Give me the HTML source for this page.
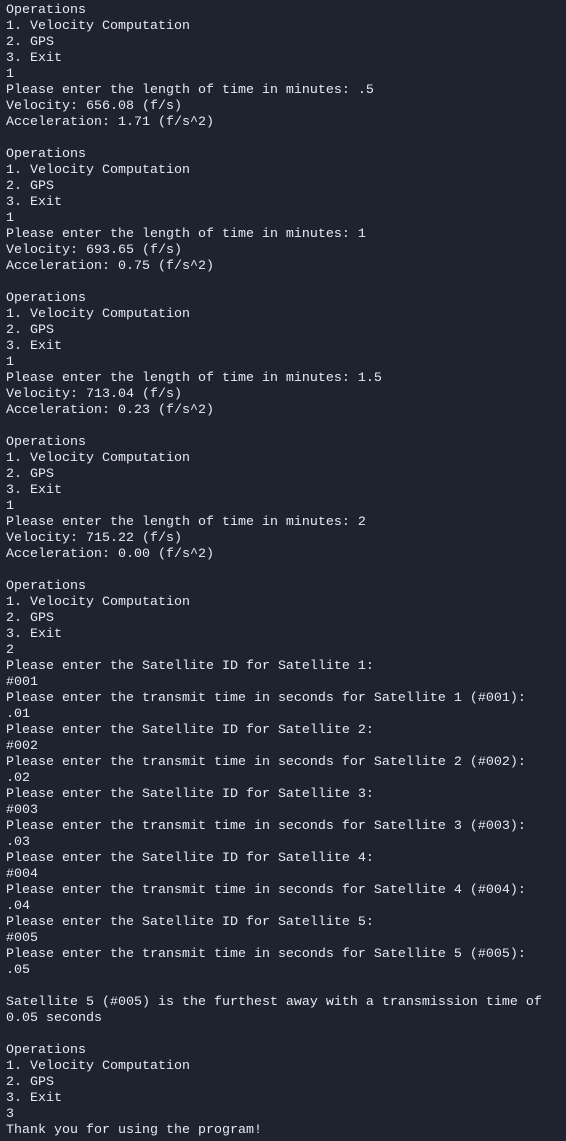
<!DOCTYPE html>
<html><head><style>
html,body{margin:0;padding:0;background:#1f2330;}
body{width:566px;height:1141px;overflow:hidden;}
pre{margin:0;padding:3px 0 0 6px;font-family:"Liberation Mono","DejaVu Sans Mono",monospace;font-size:13.33px;line-height:16px;color:#e8eaf0;}
</style></head><body><pre>Operations
1. Velocity Computation
2. GPS
3. Exit
1
Please enter the length of time in minutes: .5
Velocity: 656.08 (f/s)
Acceleration: 1.71 (f/s^2)

Operations
1. Velocity Computation
2. GPS
3. Exit
1
Please enter the length of time in minutes: 1
Velocity: 693.65 (f/s)
Acceleration: 0.75 (f/s^2)

Operations
1. Velocity Computation
2. GPS
3. Exit
1
Please enter the length of time in minutes: 1.5
Velocity: 713.04 (f/s)
Acceleration: 0.23 (f/s^2)

Operations
1. Velocity Computation
2. GPS
3. Exit
1
Please enter the length of time in minutes: 2
Velocity: 715.22 (f/s)
Acceleration: 0.00 (f/s^2)

Operations
1. Velocity Computation
2. GPS
3. Exit
2
Please enter the Satellite ID for Satellite 1:
#001
Please enter the transmit time in seconds for Satellite 1 (#001):
.01
Please enter the Satellite ID for Satellite 2:
#002
Please enter the transmit time in seconds for Satellite 2 (#002):
.02
Please enter the Satellite ID for Satellite 3:
#003
Please enter the transmit time in seconds for Satellite 3 (#003):
.03
Please enter the Satellite ID for Satellite 4:
#004
Please enter the transmit time in seconds for Satellite 4 (#004):
.04
Please enter the Satellite ID for Satellite 5:
#005
Please enter the transmit time in seconds for Satellite 5 (#005):
.05

Satellite 5 (#005) is the furthest away with a transmission time of
0.05 seconds

Operations
1. Velocity Computation
2. GPS
3. Exit
3
Thank you for using the program!</pre></body></html>
